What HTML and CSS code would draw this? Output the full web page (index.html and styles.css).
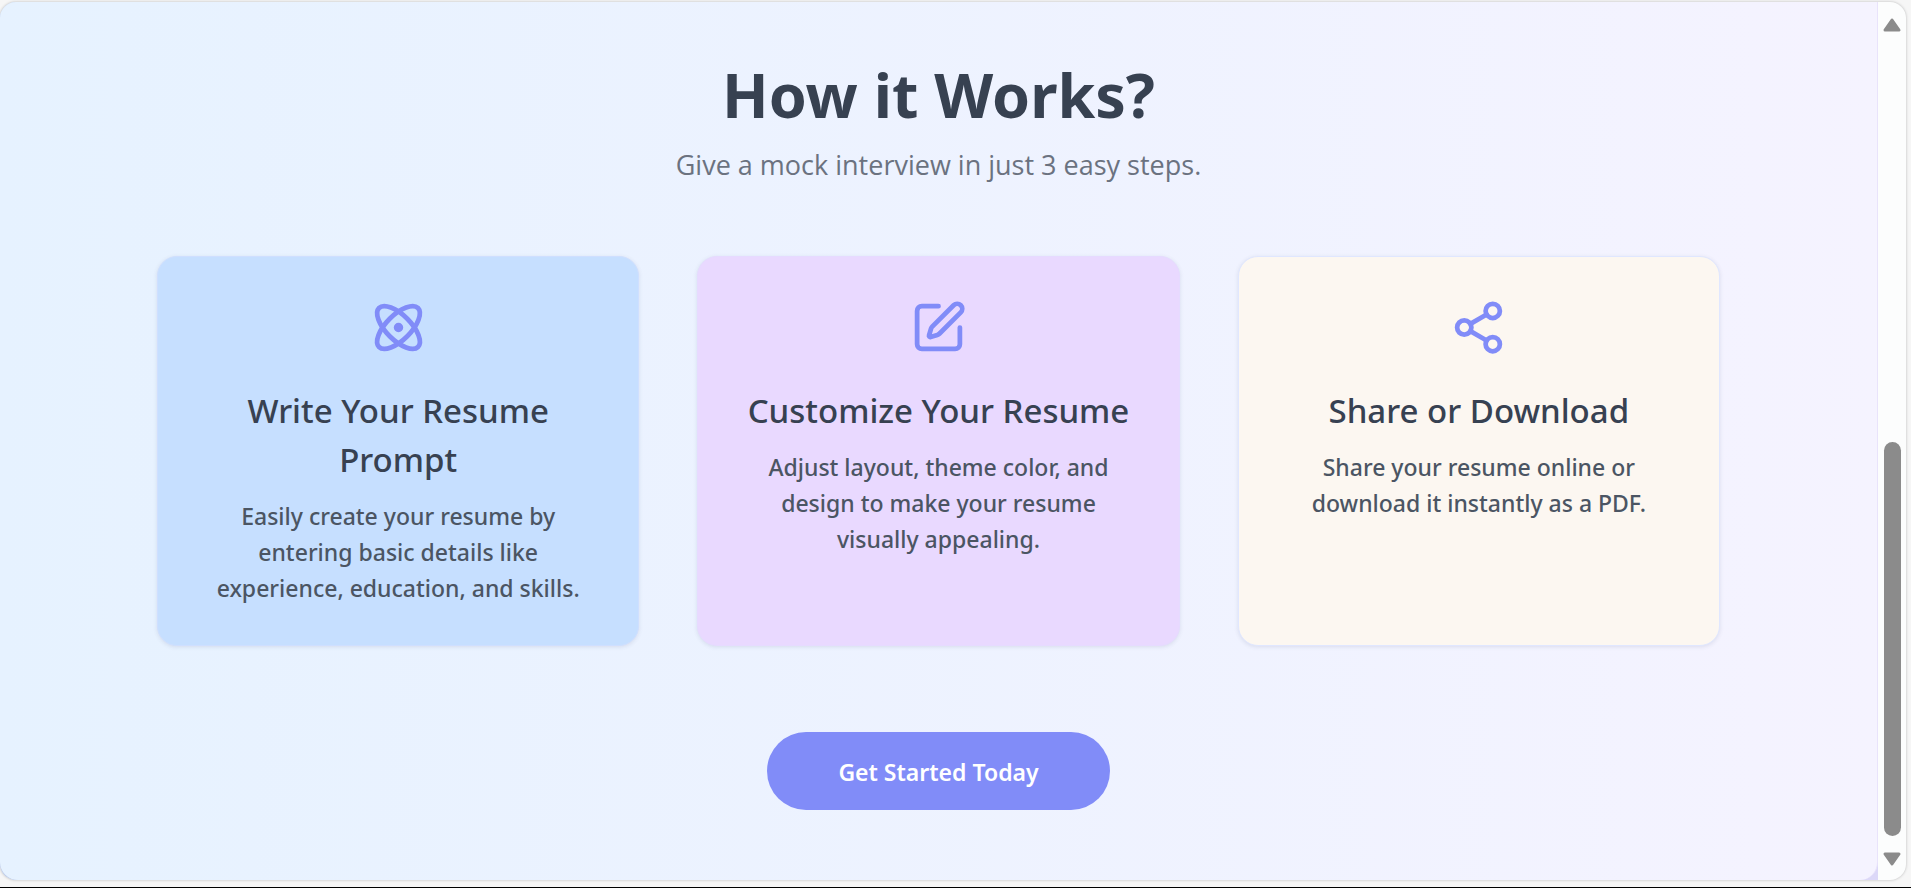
FILE: index.html
```html
<!DOCTYPE html>
<html lang="en">
<head>
<meta charset="utf-8">
<title>How it Works?</title>
<link rel="stylesheet" href="styles.css">
</head>
<body>
<div class="window">
  <div class="backdrop">
    <main class="section">
      <h1 class="heading">How it Works?</h1>
      <p class="lead">Give a mock interview in just 3 easy steps.</p>
      <div class="steps">
        <article class="card card-blue">
          <svg class="icon" viewBox="0 0 24 24" aria-hidden="true"><circle cx="12" cy="12" r="1"/><path d="M20.2 20.2c2.04-2.03.02-7.36-4.5-11.9-4.54-4.52-9.87-6.54-11.9-4.5-2.04 2.03-.02 7.36 4.5 11.9 4.54 4.52 9.87 6.54 11.9 4.5Z"/><path d="M15.7 15.7c4.52-4.54 6.54-9.87 4.5-11.9-2.03-2.04-7.36-.02-11.9 4.5-4.52 4.54-6.54 9.87-4.5 11.9 2.03 2.04 7.36.02 11.9-4.5Z"/></svg>
          <h2 class="card-title">Write Your Resume Prompt</h2>
          <p class="card-text">Easily create your resume by entering basic details like experience, education, and skills.</p>
        </article>
        <article class="card card-purple">
          <svg class="icon" viewBox="0 0 24 24" aria-hidden="true"><path d="M12 3H5a2 2 0 0 0-2 2v14a2 2 0 0 0 2 2h14a2 2 0 0 0 2-2v-7"/><path d="M18.375 2.625a1 1 0 0 1 3 3l-9.013 9.014a2 2 0 0 1-.853.505l-2.873.84a.5.5 0 0 1-.62-.62l.84-2.873a2 2 0 0 1 .506-.852z"/></svg>
          <h2 class="card-title">Customize Your Resume</h2>
          <p class="card-text">Adjust layout, theme color, and design to make your resume visually appealing.</p>
        </article>
        <article class="card card-cream">
          <svg class="icon" viewBox="0 0 24 24" aria-hidden="true"><circle cx="18" cy="5" r="3"/><circle cx="6" cy="12" r="3"/><circle cx="18" cy="19" r="3"/><path d="M8.59 13.51l6.83 3.98M15.41 6.51l-6.82 3.98"/></svg>
          <h2 class="card-title">Share or Download</h2>
          <p class="card-text">Share your resume online or download it instantly as a PDF.</p>
        </article>
      </div>
      <button class="cta" type="button">Get Started Today</button>
    </main>
  </div>
  <div class="scrollbar" aria-hidden="true">
    <svg class="arrow" viewBox="0 0 18 14"><path d="M9 2 16 12H2Z"/></svg>
    <div class="track"><div class="thumb"></div></div>
    <svg class="arrow" viewBox="0 0 18 14"><path d="M9 12 2 2H16Z"/></svg>
  </div>
</div>
</body>
</html>
```
FILE: styles.css
```css
* { box-sizing: border-box; }

body {
  margin: 0;
  min-height: 100vh;
  display: flex;
  padding: 2px 5px 7px 0;
  background: #f6f6f6;
  border-bottom: 1px solid #000;
  font-family: "Noto Sans", "Open Sans", sans-serif;
}

h1, h2, p { margin: 0; }

.window {
  flex: 1;
  display: flex;
  overflow: hidden;
  border-radius: 16px;
  background: #fcfdfd;
  box-shadow: 0 0 3px rgba(0, 0, 0, 0.25);
}

.backdrop {
  flex: 1;
  display: flex;
  background: linear-gradient(to right, #b9c8e8, #dcd8f8);
}

.section {
  flex: 1;
  display: flex;
  flex-direction: column;
  align-items: center;
  padding: 50px 157px 67px;
  border-right: 1px solid #e9e3fb;
  border-bottom-left-radius: 18px;
  border-bottom-right-radius: 18px;
  background: linear-gradient(to right, #e6f2ff, #f5f3ff);
}

.heading {
  font-size: 61px;
  line-height: 86px;
  font-weight: 700;
  color: #374151;
}

.lead {
  margin-top: 7px;
  font-family: "Open Sans", "Noto Sans", sans-serif;
  font-size: 27px;
  line-height: 40px;
  color: #6b7280;
}

.steps {
  align-self: stretch;
  display: grid;
  grid-template-columns: repeat(3, 1fr);
  gap: 58px;
  margin-top: 71px;
}

.card {
  display: flex;
  flex-direction: column;
  align-items: center;
  padding: 42px 38px 39px;
  border: 1px solid #e0e7ff;
  border-radius: 20px;
  text-align: center;
  box-shadow: 0 1px 4px rgba(55, 65, 110, 0.12);
}

.card-blue { background: #c6dfff; border-color: #cfdfff; }
.card-purple { background: #e9d9ff; border-color: #e6dbff; }
.card-cream { background: #fcf7f1; }

.icon {
  width: 57px;
  height: 57px;
  fill: none;
  stroke: #818cf8;
  stroke-width: 2;
  stroke-linecap: round;
  stroke-linejoin: round;
}

.card-title {
  margin-top: 30px;
  font-size: 33px;
  line-height: 49px;
  font-weight: 500;
  color: #374151;
}

.card-text {
  max-width: 380px;
  margin-top: 14px;
  font-size: 23px;
  line-height: 36px;
  font-weight: 500;
  color: #4b5563;
}

.cta {
  margin-top: 86px;
  padding: 22px 71px 20px;
  border: 0;
  border-radius: 39px;
  background: #818cf8;
  color: #fff;
  font-family: inherit;
  font-size: 23px;
  line-height: 36px;
  font-weight: 600;
}

.scrollbar {
  width: 28px;
  display: flex;
  flex-direction: column;
  align-items: center;
  gap: 16px;
  padding: 16px 0 14px;
}

.arrow {
  width: 18px;
  height: 14px;
  fill: #8b8b8b;
  stroke: #8b8b8b;
  stroke-width: 3;
  stroke-linejoin: round;
  overflow: visible;
}

.track {
  flex: 1;
  display: flex;
  flex-direction: column;
  justify-content: flex-end;
}

.thumb {
  width: 17px;
  height: 50%;
  border-radius: 9px;
  background: #8b8b8b;
}
```
